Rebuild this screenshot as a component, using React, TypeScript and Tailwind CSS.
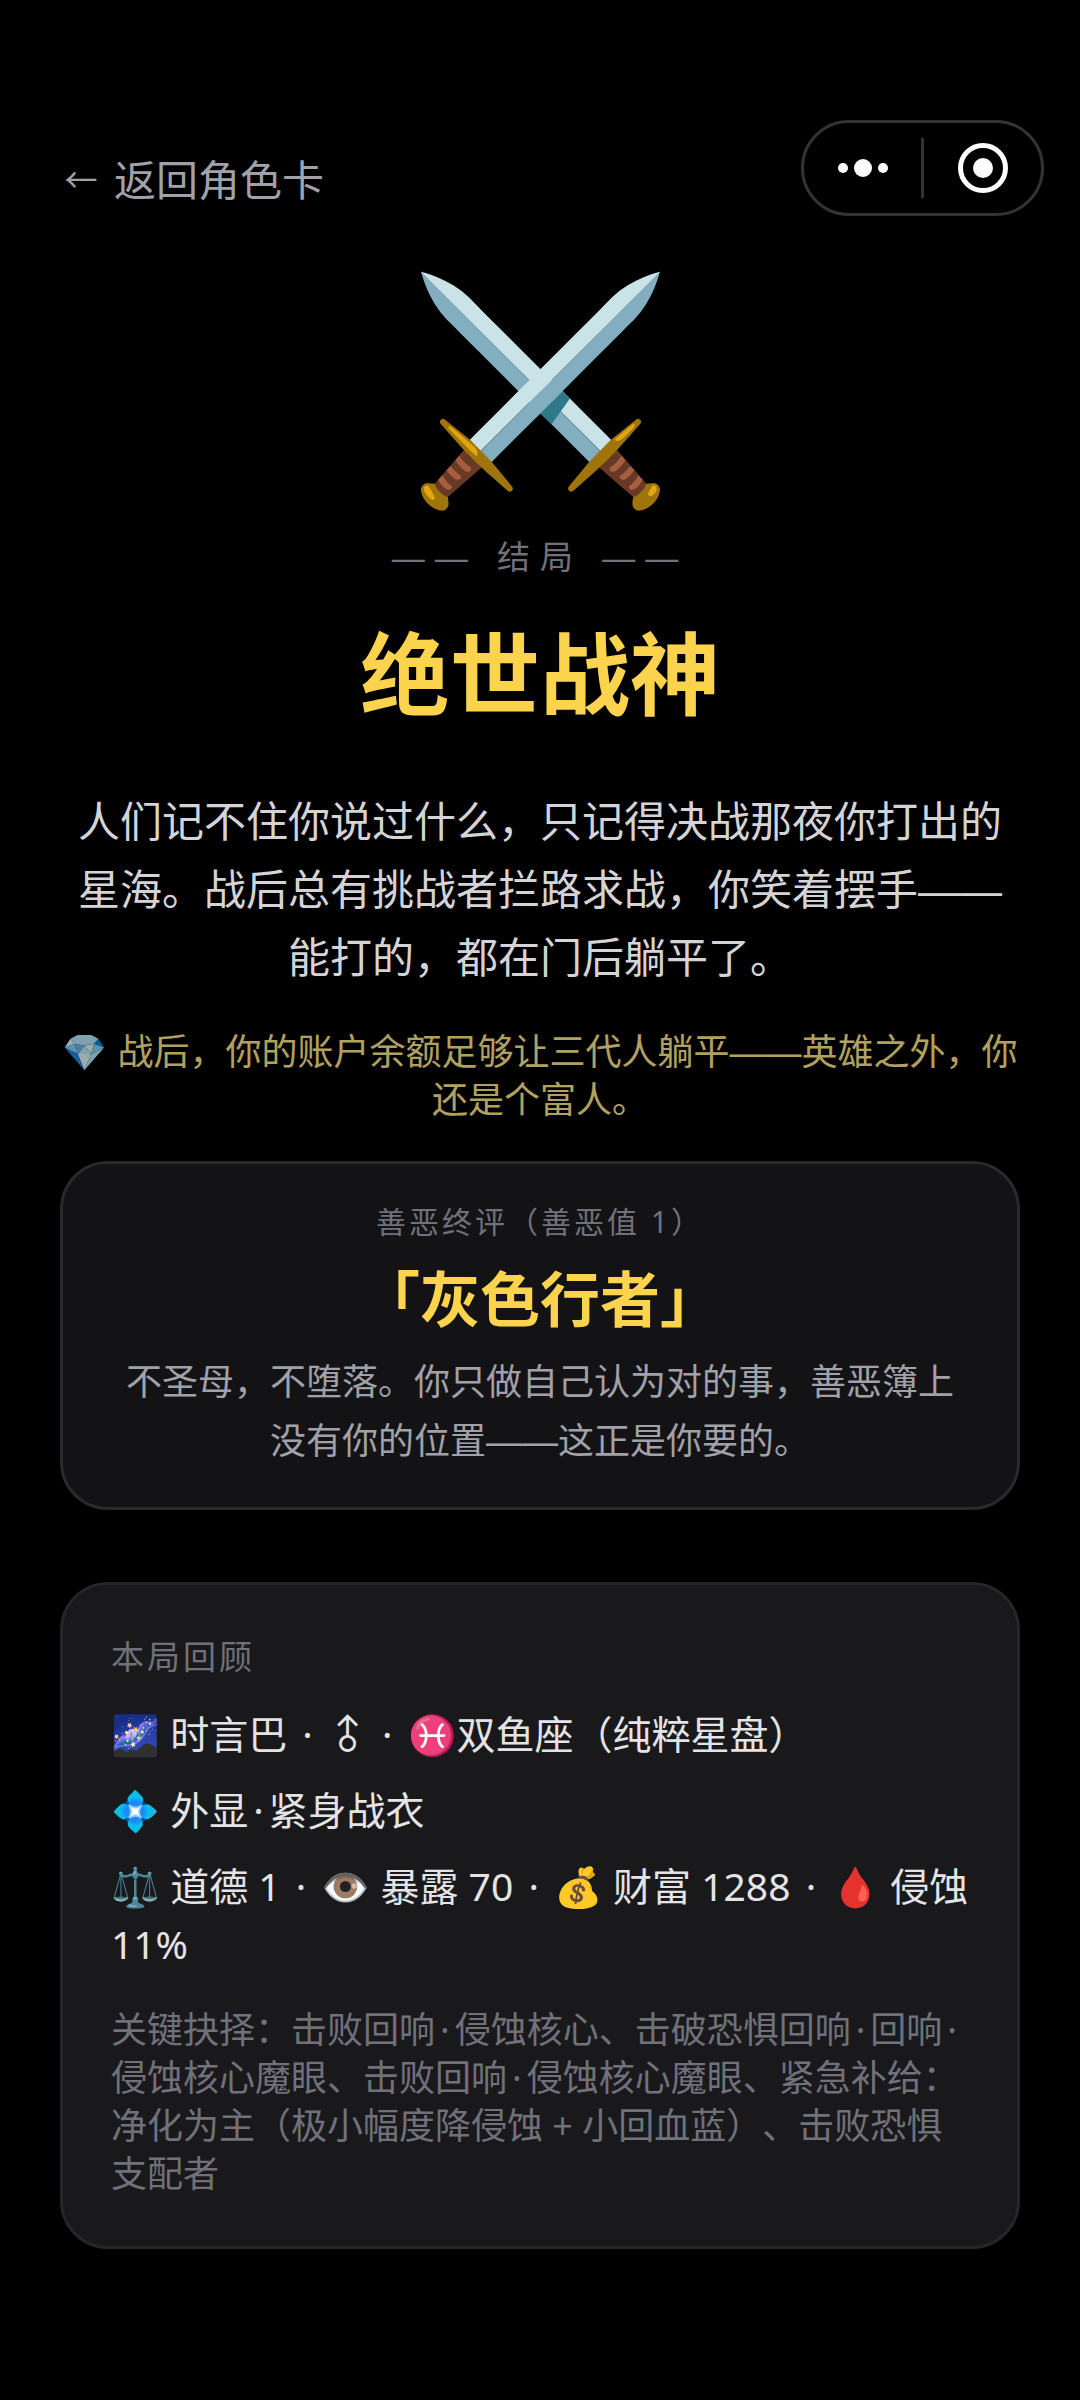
import type { ReactNode } from "react";

type CardProps = {
  className: string;
  children: ReactNode;
};

function Card({ className, children }: CardProps) {
  return (
    <section className={`rounded-[48px] border-3 px-12 ${className}`}>
      {children}
    </section>
  );
}

function Dot() {
  return <span className="mx-[5px]">·</span>;
}

function Capsule() {
  return (
    <div className="flex h-24 w-[243px] items-center rounded-full border-3 border-[#333333]">
      <button type="button" aria-label="更多" className="flex h-full flex-1 items-center justify-center">
        <svg viewBox="0 0 50 18" className="h-[18px] w-[50px]" fill="#fff">
          <circle cx="5" cy="9" r="5" />
          <circle cx="25" cy="9" r="9" />
          <circle cx="45" cy="9" r="5" />
        </svg>
      </button>
      <span className="h-[60px] w-[3px] bg-[#333333]" />
      <button type="button" aria-label="关闭" className="flex h-full flex-1 items-center justify-center">
        <svg viewBox="0 0 50 50" className="size-[50px]" fill="none">
          <circle cx="25" cy="25" r="22.5" stroke="#fff" strokeWidth="5" />
          <circle cx="25" cy="25" r="10" fill="#fff" />
        </svg>
      </button>
    </div>
  );
}

export default function App() {
  return (
    <main className="min-h-screen bg-black px-[60px] pt-[120px] pb-[150px] font-['Liberation_Sans','Noto_Sans_CJK_SC',sans-serif] [text-spacing-trim:space-all]">
      <header className="-mr-6 flex items-start justify-between">
        <button
          type="button"
          className="mt-7 flex items-center gap-3 font-['Noto_Sans_CJK_SC',sans-serif] text-[42px] leading-[60px] text-[#a1a1aa]"
        >
          <span className="w-[42px] text-center text-[33px]">←</span>
          返回角色卡
        </button>
        <Capsule />
      </header>

      <div className="mt-[54px] flex flex-col items-center text-center">
        <div className="text-[216px] leading-[240px]">⚔️</div>
        <p className="mt-6 text-[33px] leading-[48px] tracking-[10px] text-[#71717b]">—— 结局 ——</p>
        <h1 className="mt-[33px] font-['Noto_Sans_CJK_SC',sans-serif] text-[90px] leading-[108px] font-bold text-[#fcd34d]">
          绝世战神
        </h1>
        <p className="mt-[66px] text-[42px] leading-[68px] text-[#d4d4d8]">
          人们记不住你说过什么，只记得决战那夜你打出的星海。战后总有挑战者拦路求战，你笑着摆手——能打的，都在门后躺平了。
        </p>
        <p className="mt-9 text-[36px] leading-[48px] text-[#fde68a] opacity-70">
          💎 战后，你的账户余额足够让三代人躺平——英雄之外，你还是个富人。
        </p>
      </div>

      <Card className="mt-9 border-[#2a2a2d] bg-[#131315] pt-[35px] pb-9 text-center">
        <p className="font-['Noto_Sans','Noto_Sans_CJK_SC',sans-serif] text-[30px] leading-[45px] tracking-[3px] text-[#71717b]">
          善恶终评（善恶值 1）
        </p>
        <h2 className="mt-[10px] font-['Noto_Sans_CJK_SC',sans-serif] text-[60px] leading-[84px] font-bold text-[#fcd34d]">
          「灰色行者」
        </h2>
        <p className="mt-[15px] text-[36px] leading-[59px] text-[#a1a1aa]">
          不圣母，不堕落。你只做自己认为对的事，善恶簿上没有你的位置——这正是你要的。
        </p>
      </Card>

      <Card className="mt-[72px] border-[#262628] bg-[#19191b] py-12 font-['Noto_Sans','Noto_Sans_CJK_SC',sans-serif]">
        <h3 className="text-[33px] leading-[48px] tracking-[3px] text-[#71717b]">本局回顾</h3>
        <div className="mt-6 flex flex-col gap-[18px] text-[39px] leading-[58px] text-[#e4e4e7]">
          <p>
            🌌 时言巴 <Dot /> <span className="inline-block -rotate-45">♂</span> <Dot /> ♓双鱼座（纯粹星盘）
          </p>
          <p>
            💠 外显<Dot />紧身战衣
          </p>
          <p>
            ⚖️ 道德 1 <Dot /> 👁️ 暴露 70 <Dot /> 💰 财富 1288 <Dot /> 🩸 侵蚀 11%
          </p>
        </div>
        <p className="mt-[33px] text-[36px] leading-[48px] text-[#71717b]">
          关键抉择：击败回响<Dot />侵蚀核心、击破恐惧回响<Dot />回响<Dot />侵蚀核心魔眼、击败回响<Dot />侵蚀核心魔眼、紧急补给：净化为主（极小幅度降侵蚀 + 小回血蓝）、击败恐惧支配者
        </p>
      </Card>
    </main>
  );
}
